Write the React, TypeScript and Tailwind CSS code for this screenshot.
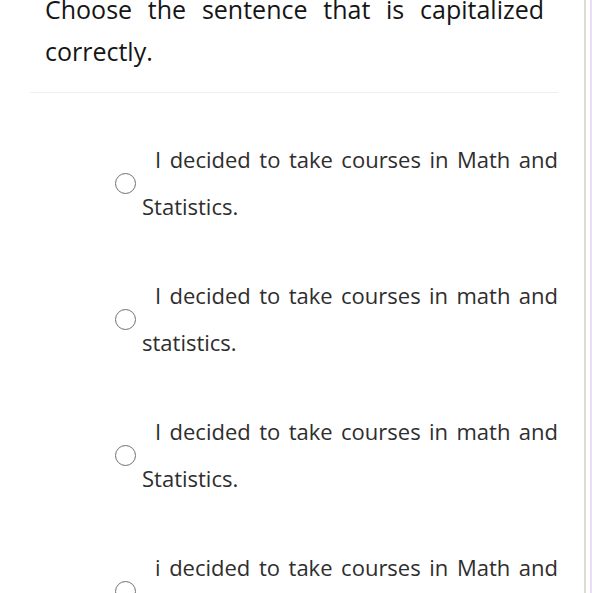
import React from "react";

const options = [
  "I decided to take courses in Math and Statistics.",
  "I decided to take courses in math and statistics.",
  "I decided to take courses in math and Statistics.",
  "i decided to take courses in Math and statistics.",
];

export default function App() {
  return (
    <div
      className="flex h-[593px] w-full overflow-hidden bg-white"
      style={{ fontFamily: '"Open Sans", "Noto Sans", sans-serif' }}
    >
      <div className="min-w-0 flex-1 pl-[30px] pr-[26px]">
        <p className="-mt-[12px] pl-[15px] pr-[14px] text-justify text-[25px] leading-[42px] text-[#151515]">
          Choose the sentence that is capitalized correctly.
        </p>
        <div className="mt-[20px] border-t border-[#efefef]" />
        <div className="mt-[43px] flex flex-col gap-[42px]">
          {options.map((o, i) => (
            <div key={i} className="flex items-center pl-[85px]">
              <div className="h-[21px] w-[21px] shrink-0 rounded-full border-[1.5px] border-[#707070]" />
              <p className="ml-[6px] min-w-0 flex-1 indent-[13px] text-justify text-[22px] leading-[47px] text-[#2e2e2e]">
                {o}
              </p>
            </div>
          ))}
        </div>
      </div>
      <div className="w-[2px] shrink-0 bg-[#dadcd6]" />
      <div className="w-[4px] shrink-0 bg-white" />
      <div className="w-[2px] shrink-0 bg-[#ecdcf4]" />
    </div>
  );
}
